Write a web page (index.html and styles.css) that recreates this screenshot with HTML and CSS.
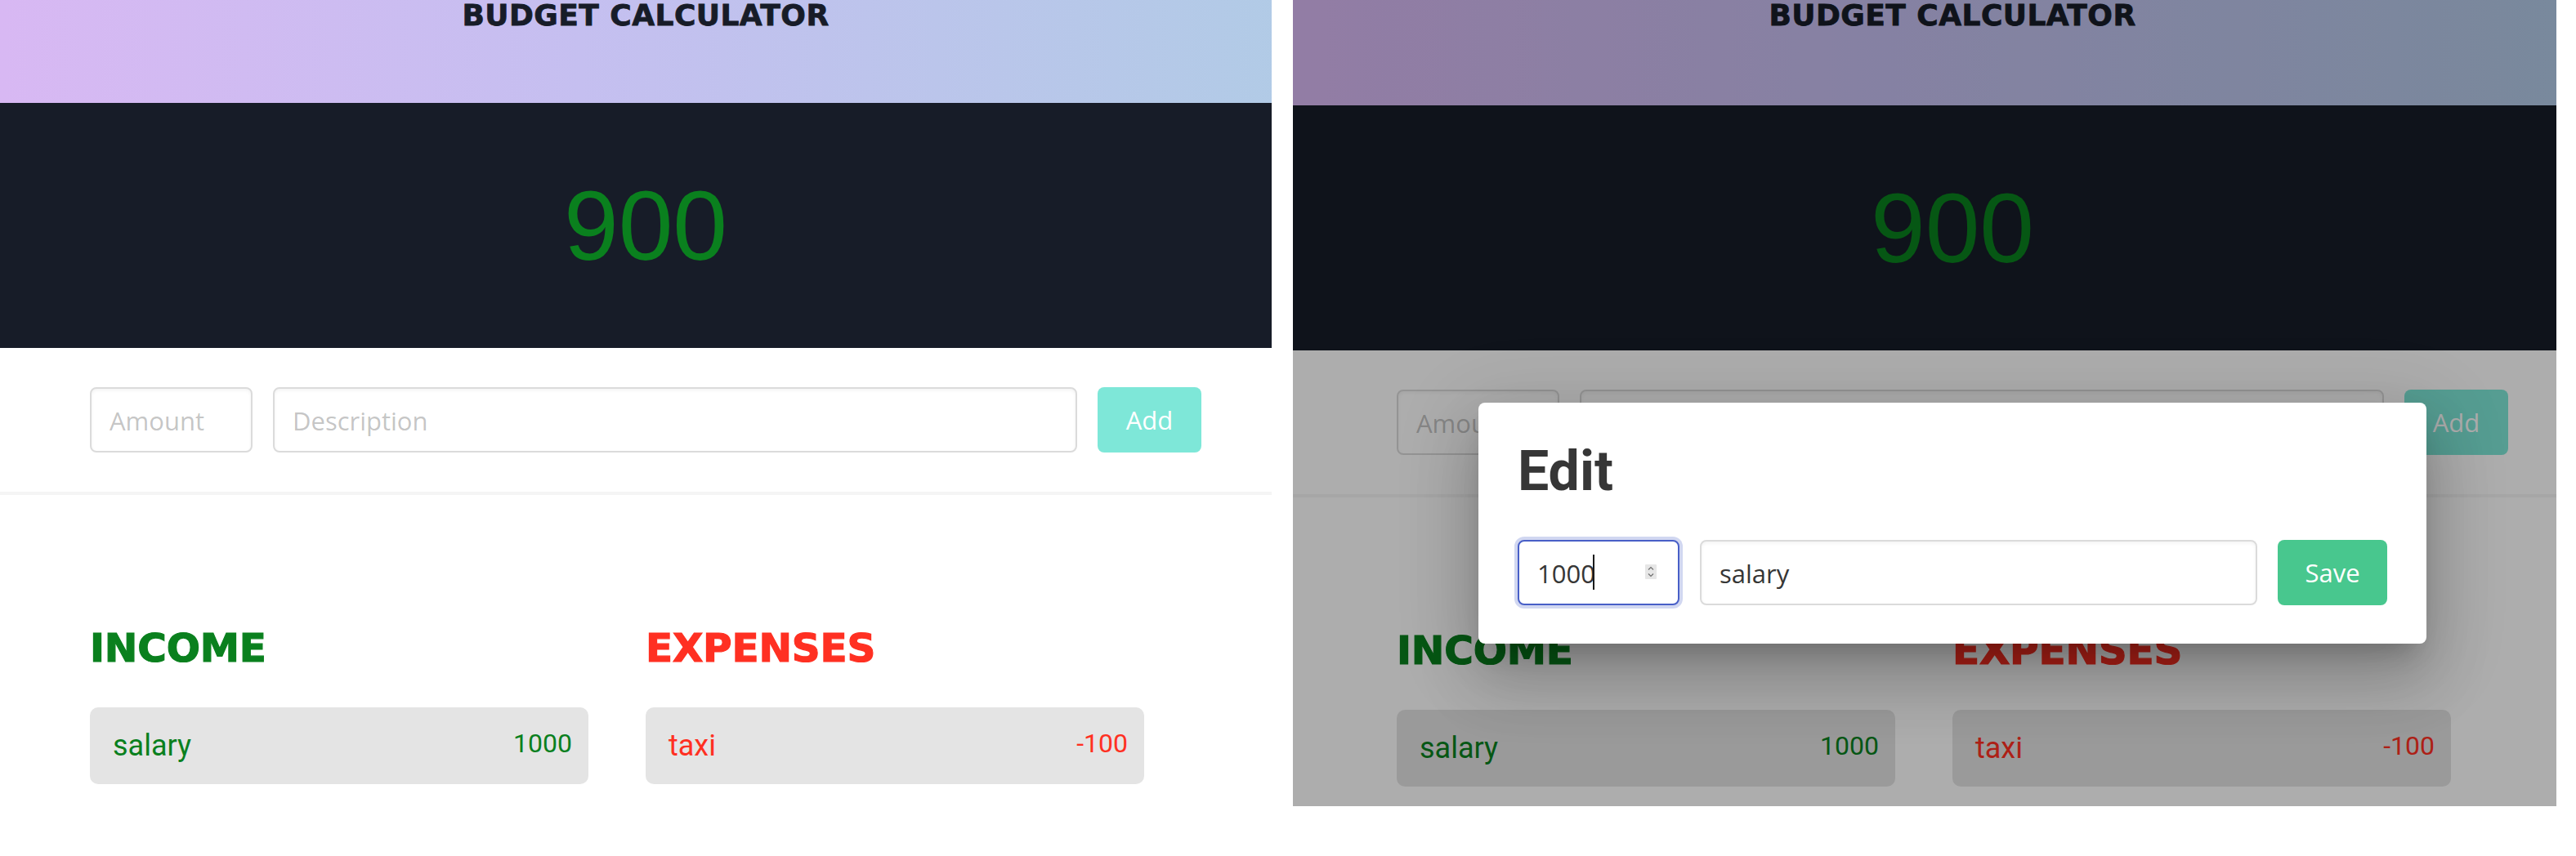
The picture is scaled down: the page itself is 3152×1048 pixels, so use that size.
FILE: index.html
```html
<!DOCTYPE html>
<html lang="en">
<head>
<meta charset="utf-8">
<title>Budget Calculator</title>
<link rel="stylesheet" href="styles.css">
</head>
<body>
<div class="shots">
  <div class="shot shot-left">
    <div class="page page-narrow">
      <header class="hero"><h1 class="hero-title">BUDGET CALCULATOR</h1></header>
      <div class="balance"><span class="balance-value">900</span></div>
      <section class="entry">
        <form class="entry-row">
          <input class="input input-amount" type="text" placeholder="Amount">
          <input class="input input-desc" type="text" placeholder="Description">
          <button class="btn btn-add" type="button" disabled>Add</button>
        </form>
      </section>
      <hr class="divider">
      <section class="lists">
        <div class="list list-income">
          <h2 class="list-title">INCOME</h2>
          <div class="item"><span class="item-desc">salary</span><span class="item-amt">1000</span></div>
        </div>
        <div class="list list-expense">
          <h2 class="list-title">EXPENSES</h2>
          <div class="item"><span class="item-desc">taxi</span><span class="item-amt">-100</span></div>
        </div>
      </section>
    </div>
  </div>

  <div class="shot shot-right">
    <div class="page page-wide">
      <header class="hero hero-tall"><h1 class="hero-title">BUDGET CALCULATOR</h1></header>
      <div class="balance"><span class="balance-value">900</span></div>
      <section class="entry">
        <form class="entry-row">
          <input class="input input-amount" type="text" placeholder="Amount">
          <input class="input input-desc" type="text" placeholder="Description">
          <button class="btn btn-add" type="button" disabled>Add</button>
        </form>
      </section>
      <hr class="divider">
      <section class="lists">
        <div class="list list-income">
          <h2 class="list-title">INCOME</h2>
          <div class="item"><span class="item-desc">salary</span><span class="item-amt">1000</span></div>
        </div>
        <div class="list list-expense">
          <h2 class="list-title">EXPENSES</h2>
          <div class="item"><span class="item-desc">taxi</span><span class="item-amt">-100</span></div>
        </div>
      </section>
    </div>
    <div class="backdrop">
      <div class="dialog">
        <h2 class="dialog-title">Edit</h2>
        <div class="dialog-row">
          <div class="field-amount">
            <input class="input input-focus" type="text" value="1000">
            <span class="caret"></span>
            <svg class="spin" width="14" height="18" viewBox="0 0 14 18" aria-hidden="true">
              <rect x="0" y="0" width="14" height="18" rx="1" fill="#e6e6e6"/>
              <path d="M4 6.5 L7 3.5 L10 6.5" fill="none" stroke="#6f6f6f" stroke-width="1.2"/>
              <path d="M4 11.5 L7 14.5 L10 11.5" fill="none" stroke="#6f6f6f" stroke-width="1.2"/>
            </svg>
          </div>
          <input class="input input-desc" type="text" value="salary">
          <button class="btn btn-save" type="button">Save</button>
        </div>
      </div>
    </div>
  </div>
</div>
</body>
</html>
```

FILE: styles.css
```css
* { box-sizing: border-box; }

html, body {
  margin: 0;
  padding: 0;
  background: #ffffff;
}

body {
  width: 3152px;
  height: 1048px;
  overflow: hidden;
  font-family: "Open Sans", "Noto Sans", sans-serif;
}

.shots {
  display: flex;
  align-items: flex-start;
  gap: 26px;
}

.shot {
  overflow: hidden;
  flex: none;
}

.shot-left {
  width: 1556px;
  height: 1048px;
}

.shot-right {
  width: 1546px;
  height: 987px;
  position: relative;
}

.page {
  background: #ffffff;
  height: 1100px;
}

.page-narrow { width: 1580px; }
.page-wide { width: 1614px; }

/* header */
.hero {
  height: 126px;
  padding-top: 1px;
  background: linear-gradient(90deg, #d8b8f3 0%, #c5bff0 45%, #b1cbe6 100%);
}

.hero-tall { height: 129px; }

.hero-title {
  margin: 0;
  font-family: "DejaVu Sans", "Liberation Sans", sans-serif;
  font-weight: 700;
  font-size: 36px;
  line-height: 36px;
  text-align: center;
  color: #171c28;
  letter-spacing: 0.45px;
  -webkit-text-stroke: 0.8px #171c28;
}

/* balance */
.balance {
  height: 300px;
  background: #171c28;
  display: flex;
  align-items: center;
  justify-content: center;
}

.balance-value {
  font-family: "Liberation Sans", Arial, sans-serif;
  font-size: 120px;
  line-height: 120px;
  color: #0a801e;
}

/* entry form */
.entry {
  padding-top: 48px;
}

.entry-row,
.dialog-row {
  display: flex;
  gap: 25px;
}

.entry-row {
  width: 1360px;
  margin: 0 auto;
}

.input {
  height: 80px;
  border: 2px solid #dbdbdb;
  border-radius: 8px;
  padding: 2px 22px 0;
  font-family: "Open Sans", "Noto Sans", sans-serif;
  font-size: 31px;
  color: #363636;
  background: #ffffff;
  box-shadow: inset 0 2px 4px rgba(10, 10, 10, 0.05);
  outline: none;
  min-width: 0;
}

.input::placeholder {
  color: rgba(54, 54, 54, 0.3);
}

.input-amount { width: 199px; flex: none; }
.input-desc { flex: 1; }

.btn {
  height: 80px;
  border: none;
  border-radius: 8px;
  color: #ffffff;
  font-family: "Open Sans", "Noto Sans", sans-serif;
  font-size: 31px;
  flex: none;
  padding: 0;
}

.btn-add {
  width: 127px;
  background: #00d1b2;
  opacity: 0.5;
}

.btn-save {
  width: 134px;
  background: #48c78e;
}

.divider {
  margin: 48px 0 0;
  border: none;
  height: 4px;
  background: #f5f5f5;
}

/* lists */
.lists {
  width: 1360px;
  margin: 0 auto;
  padding-top: 159px;
  display: grid;
  grid-template-columns: 1fr 1fr;
}

.list {
  padding-right: 70px;
}

.list-title {
  margin: 0 0 45px;
  font-family: "DejaVu Sans", "Liberation Sans", sans-serif;
  font-weight: 700;
  font-size: 48.5px;
  line-height: 56px;
  letter-spacing: -0.2px;
  -webkit-text-stroke: 1.2px currentColor;
}

.list-income { color: #0a801e; }
.list-expense { color: #ff3022; }

.item {
  height: 94px;
  background: #e4e4e4;
  border-radius: 10px;
  padding: 0 20px 0 28px;
  display: flex;
  align-items: center;
  justify-content: space-between;
  font-family: Roboto, "Liberation Sans", sans-serif;
}

.item-desc {
  font-size: 36px;
}

.item-amt {
  font-size: 32px;
  margin-bottom: 6px;
}

/* modal */
.backdrop {
  position: absolute;
  top: 0;
  left: 0;
  width: 1614px;
  height: 987px;
  background: rgba(0, 0, 0, 0.32);
  display: flex;
  justify-content: center;
  align-items: flex-start;
  padding-top: 493px;
}

.dialog {
  width: 1160px;
  background: #ffffff;
  border-radius: 8px;
  padding: 44px 48px 47px;
  box-shadow:
    0 22px 30px -14px rgba(0, 0, 0, 0.2),
    0 48px 76px 6px rgba(0, 0, 0, 0.14),
    0 18px 92px 16px rgba(0, 0, 0, 0.12);
}

.dialog-title {
  margin: 0 0 44px;
  font-family: Roboto, "Liberation Sans", sans-serif;
  font-weight: 700;
  font-size: 68px;
  line-height: 80px;
  color: #363636;
}

.field-amount {
  position: relative;
  width: 198px;
  flex: none;
}

.input-focus {
  width: 100%;
  border-color: #485fc7;
  box-shadow: 0 0 0 4px rgba(72, 95, 199, 0.25);
}

.caret {
  position: absolute;
  left: 92px;
  top: 18px;
  width: 2px;
  height: 43px;
  background: #1a1a1a;
}

.spin {
  position: absolute;
  left: 156px;
  top: 30px;
}
```
